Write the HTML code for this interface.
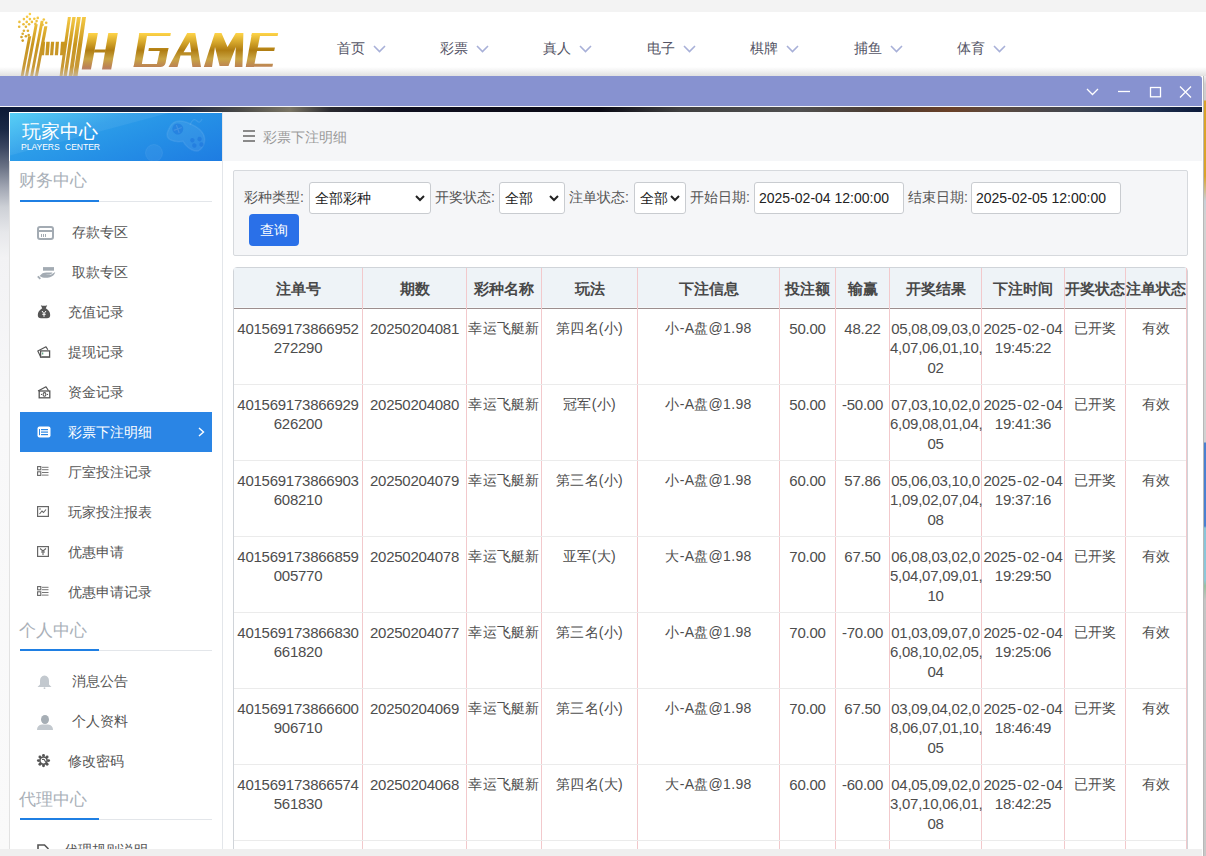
<!DOCTYPE html>
<html><head><meta charset="utf-8">
<style>
*{box-sizing:border-box;margin:0;padding:0}
html,body{width:1206px;height:856px;overflow:hidden;background:#fff;font-family:"Liberation Sans",sans-serif;}
.abs{position:absolute}
#topstrip{left:0;top:0;width:1206px;height:12px;background:#f3f3f3}
#header{left:0;top:12px;width:1206px;height:64px;background:#fff}
#hshadow{left:0;top:67px;width:1206px;height:9px;background:linear-gradient(rgba(255,255,255,0),rgba(200,200,200,0.55))}
.nav{top:39px;font-size:14px;color:#555566;line-height:18px;white-space:nowrap}
.nav svg{position:absolute;left:36px;top:5.5px}
#dialog{left:0;top:76px;width:1202px;height:780px;}
#title{left:0;top:76px;width:1202px;height:30px;background:#8792d0;border-radius:0 3px 0 0}
#tline{left:0;top:106px;width:1202px;height:1px;background:#f4f4f8}
#bgimg{left:0;top:107px;width:1202px;height:749px;background:linear-gradient(90deg,#0c1a3a 0px,#1c2640 180px,#4a4a48 240px,#7a7565 290px,#2a2a30 330px,#101020 400px,#0a0a14 600px,#404040 680px,#505050 800px,#4a3a30 880px,#6a4028 950px,#5a4a40 1000px,#404550 1080px,#203050 1150px,#0c1a3a 1202px)}
#leftfade{left:0;top:107px;width:10px;height:749px;background:linear-gradient(#0c1835 0px,#1a2845 22px,#3a4560 40px,#6a7285 60px,#a0a5b2 80px,#cdd0d6 100px,#e6e7ea 125px,#f2f2f4 150px,#f8f8f9 300px,#fafafa 749px)}
#side{left:9px;top:112px;width:214px;height:744px;background:#fff;border-left:1px solid #e2e2e2;border-right:1px solid #e3e6ea}
#sidehead{left:9px;top:112px;width:213px;height:49px;background:linear-gradient(165deg,rgba(255,255,255,0.10) 0%,rgba(255,255,255,0.06) 40%,rgba(255,255,255,0) 41%),linear-gradient(160deg,#45c9f5 0%,#2c9de9 35%,#2590e6 60%,#1e7ce2 100%);border-top:1px solid #fff;border-left:1px solid #fff}
#main{left:223px;top:112px;width:979px;height:744px;background:#fff}
#crumb{left:223px;top:112px;width:979px;height:49px;background:#f5f6f8}
#filter{left:233px;top:170px;width:955px;height:86px;background:#f5f6f8;border:1px solid #d6d9dd;border-radius:2px}
.lbl{font-size:14px;color:#555;line-height:16px;top:189px;white-space:nowrap}
.sel{top:182px;height:32px;background:#fff;border:1px solid #c9ccd0;border-radius:3px;font-size:14px;color:#222;line-height:30px;padding-left:5px;white-space:nowrap}
.sel svg{position:absolute;right:5px;top:12px}
#btn{left:249px;top:214px;width:50px;height:32px;background:#2a70e8;border-radius:4px;color:#fff;font-size:14px;line-height:32px;text-align:center}
#bottomstrip{left:0;top:849px;width:1202px;height:7px;background:#efefef}
#rightstrip{left:1203px;top:76px;width:3px;height:780px;background:linear-gradient(#f0f0f0 0px,#d0d0d0 8px,#cccccc 24px,#d9a32a 25px,#d9a32a 100px,#c8d0d8 125px,#d2d2d2 140px,#d2d2d2 366px,#4a80d0 367px,#4a80d0 450px,#88c4d8 452px,#8cc8d8 504px,#98c0a0 510px,#c4c4c4 524px,#c8c8c8 780px);border-left:1px solid #b8b8b8}
.sec{left:19px;font-size:17px;color:#a9b0b8;line-height:20px;white-space:nowrap}
.secline{left:20px;width:192px;height:2px;border-bottom:1px solid #e3e6ea}
.secline i{position:absolute;left:0;top:0;width:79px;height:2px;background:#1f7fe3}
.mi{left:20px;width:192px;height:40px;font-size:14px;color:#555;line-height:40px;white-space:nowrap}
.mi .t{position:absolute;left:52px;top:0}
.mi .ic{position:absolute;left:17px;top:14px;line-height:0}
.mi .ic svg{display:block}
.mi.act{background:#2a85e5;color:#fff}
/* table */
#tbl{left:233px;top:267px;width:955px;height:600px;border:1px solid #d0d4d9;border-radius:4px 4px 0 0;overflow:hidden;background:#fff}
table{border-collapse:collapse;table-layout:fixed;font-size:14px;color:#555;}
th{height:41px;background:#eef2f5;font-weight:bold;color:#444;border-right:1px solid #f2c6c9;border-bottom:2px solid #948585;text-align:center;white-space:nowrap;font-size:14px}
td{height:76px;vertical-align:top;text-align:center;border-right:1px solid #f2c6c9;border-bottom:1px solid #e8e8e8;line-height:19px;padding-top:10px;white-space:nowrap}

.th{top:269px;height:39px;line-height:40px;text-align:center;font-weight:bold;font-size:15px;color:#484848;white-space:nowrap;overflow:visible}
.vl{top:268px;width:1px;height:600px;background:#f2c9cc}
.hl{left:234px;width:952px;height:1px;background:#ebebeb}
.td{font-size:14px;line-height:19.25px;color:#4d4d4d;text-align:center;white-space:nowrap;letter-spacing:0.3px}
.td.n{font-size:15px;letter-spacing:-0.25px}
.hy{font-style:normal;padding:0 1.2px}
.mi .chev{position:absolute;left:178px;top:15px}
</style></head><body>
<div id="topstrip" class="abs"></div>
<div id="header" class="abs"></div>

<!-- nav -->
<div class="abs nav" style="left:337px">首页<svg width="13" height="8" viewBox="0 0 13 8"><path d="M1 1L6.5 6.5L12 1" fill="none" stroke="#a8b0d8" stroke-width="1.6"/></svg></div>
<div class="abs nav" style="left:440px">彩票<svg width="13" height="8" viewBox="0 0 13 8"><path d="M1 1L6.5 6.5L12 1" fill="none" stroke="#a8b0d8" stroke-width="1.6"/></svg></div>
<div class="abs nav" style="left:543px">真人<svg width="13" height="8" viewBox="0 0 13 8"><path d="M1 1L6.5 6.5L12 1" fill="none" stroke="#a8b0d8" stroke-width="1.6"/></svg></div>
<div class="abs nav" style="left:647px">电子<svg width="13" height="8" viewBox="0 0 13 8"><path d="M1 1L6.5 6.5L12 1" fill="none" stroke="#a8b0d8" stroke-width="1.6"/></svg></div>
<div class="abs nav" style="left:750px">棋牌<svg width="13" height="8" viewBox="0 0 13 8"><path d="M1 1L6.5 6.5L12 1" fill="none" stroke="#a8b0d8" stroke-width="1.6"/></svg></div>
<div class="abs nav" style="left:854px">捕鱼<svg width="13" height="8" viewBox="0 0 13 8"><path d="M1 1L6.5 6.5L12 1" fill="none" stroke="#a8b0d8" stroke-width="1.6"/></svg></div>
<div class="abs nav" style="left:957px">体育<svg width="13" height="8" viewBox="0 0 13 8"><path d="M1 1L6.5 6.5L12 1" fill="none" stroke="#a8b0d8" stroke-width="1.6"/></svg></div>

<!-- LOGO -->
<svg class="abs" style="left:0;top:0" width="300" height="76" viewBox="0 0 300 76"><defs><linearGradient id="gs" x1="0" y1="13" x2="0" y2="76" gradientUnits="userSpaceOnUse"><stop offset="0" stop-color="#fcd14a"/><stop offset="0.5" stop-color="#c8951e"/><stop offset="1" stop-color="#c89a40"/></linearGradient><linearGradient id="gl" x1="0" y1="33" x2="0" y2="69" gradientUnits="userSpaceOnUse"><stop offset="0" stop-color="#ffd548"/><stop offset="0.48" stop-color="#b07d12"/><stop offset="0.72" stop-color="#c9a543"/><stop offset="1" stop-color="#b8785a"/></linearGradient></defs><g fill="url(#gs)"><polygon points="20.7,76.0 23.6,76.0 31.2,36.2 28.2,36.2"/><polygon points="25.0,76.0 28.0,76.0 37.8,24.3 34.8,24.3"/><polygon points="30.2,76.0 33.1,76.0 43.6,20.7 40.7,20.7"/><polygon points="34.9,76.0 37.9,76.0 47.4,26.3 44.3,26.3"/><polygon points="59.6,76.0 62.6,76.0 70.9,17.0 67.9,17.0"/><polygon points="63.5,76.0 66.9,76.0 75.7,17.0 72.3,17.0"/><polygon points="68.7,76.0 72.5,76.0 80.8,17.0 77.0,17.0"/><polygon points="73.1,76.0 77.6,76.0 86.0,17.0 82.2,17.0"/><polygon points="41.9,41.8 45.1,41.8 44.1,55.3 40.9,55.3"/><polygon points="46.3,41.8 49.8,41.8 48.8,55.3 45.3,55.3"/><polygon points="51.0,41.8 54.2,41.8 53.2,55.3 50.0,55.3"/><polygon points="55.8,41.8 59.0,41.8 58.0,55.3 54.8,55.3"/><polygon points="61.0,41.8 65.3,41.8 64.3,55.3 60.0,55.3"/><circle cx="29.9" cy="14.0" r="1.3"/><circle cx="27.1" cy="16.8" r="1.3"/><circle cx="23.9" cy="19.1" r="1.3"/><circle cx="29.9" cy="19.1" r="1.3"/><circle cx="34.3" cy="18.7" r="1.3"/><circle cx="37.8" cy="17.9" r="1.3"/><circle cx="43.8" cy="19.5" r="1.3"/><circle cx="19.4" cy="21.9" r="1.3"/><circle cx="26.7" cy="21.9" r="1.3"/><circle cx="31.9" cy="21.9" r="1.3"/><circle cx="36.6" cy="21.1" r="1.3"/><circle cx="46.2" cy="22.7" r="1.3"/><circle cx="23.5" cy="24.3" r="1.3"/><circle cx="29.1" cy="24.3" r="1.3"/><circle cx="35.4" cy="23.9" r="1.3"/><circle cx="42.6" cy="24.7" r="1.3"/><circle cx="19.2" cy="26.7" r="1.3"/><circle cx="25.9" cy="26.7" r="1.3"/><circle cx="23.9" cy="30.7" r="1.3"/><circle cx="27.9" cy="30.7" r="1.3"/><circle cx="22.7" cy="33.8" r="1.3"/><circle cx="28.7" cy="35.0" r="1.3"/><circle cx="25.9" cy="36.2" r="1.3"/><circle cx="21.5" cy="37.0" r="1.3"/><circle cx="22.7" cy="40.6" r="1.3"/></g><g fill="url(#gl)"><polygon points="88.4,33.0 97.9,33.0 90.9,69.5 81.7,69.5"/><polygon points="108.3,33.0 117.8,33.0 111.2,69.5 102.0,69.5"/><polygon points="94.5,49.4 106.0,49.4 105.4,52.5 93.9,52.5"/><polygon points="139.4,33.0 170.9,33.0 170.3,36.0 138.8,36.0"/><polygon points="139.4,33.0 147.5,33.0 141.3,67.0 133.6,67.0"/><path d="M134.1 64 L161 64 L160.5 67 L133.6 67 Z"/><polygon points="148.9,48.0 168.4,48.0 167.9,51.0 148.4,51.0"/><path d="M160.4 48 L168.4 48 L165.6 63 Q164.5 67 160 67 L153 67 L156.9 64 Z"/><path fill-rule="evenodd" d="M187.2 33 L195.3 33 L201 67 L192.4 67 L190.8 55.6 L180.5 55.6 L177.5 67 L168.5 67 Z M189.8 42 L191.2 52.3 L183.5 52.3 Z"/><polygon points="203.8,67.0 214.8,33.0 221.5,33.0 227.5,47.0 235.8,33.0 243.4,33.0 242.4,67.0 234.8,67.0 235.8,47.0 228.5,66.0 219.6,66.0 215.0,47.0 212.0,67.0"/><polygon points="252.0,33.0 260.6,33.0 253.9,67.0 245.8,67.0"/><polygon points="252.0,33.0 278.2,33.0 277.6,36.0 251.4,36.0"/><polygon points="256.0,47.5 274.9,47.5 274.2,50.9 255.3,50.9"/><polygon points="246.4,63.7 273.0,63.7 272.4,66.7 245.8,66.7"/></g></svg>

<div id="hshadow" class="abs"></div>
<div id="bgimg" class="abs"></div>
<div id="leftfade" class="abs"></div>
<div id="title" class="abs"></div>
<div id="tline" class="abs"></div>
<svg class="abs" style="left:1080px;top:80px" width="122" height="22" viewBox="0 0 122 22"><g fill="none" stroke="#fff" stroke-width="1.3"><path d="M7 9L12.5 14.5L18 9"/><path d="M38 11.5H50"/><rect x="70.5" y="7.5" width="10" height="9.3"/><path d="M100 6.5L111 17.5M111 6.5L100 17.5"/></g></svg>
<div id="rightstrip" class="abs"></div>

<div id="side" class="abs"></div>
<div id="sidehead" class="abs"></div>
<svg class="abs" style="left:10px;top:113px" width="212" height="48" viewBox="0 0 212 48"><g transform="rotate(25 176 22)"><path d="M158 22 Q158 10 176 10 Q194 10 196 22 Q197 33 188 33 Q182 33 176 29 Q170 33 164 33 Q157 33 158 22 Z" fill="#fff" fill-opacity="0.07" stroke="#fff" stroke-opacity="0.08" stroke-width="1.5"/><circle cx="166" cy="20" r="5.5" fill="#1c74dc" fill-opacity="0.55"/><path d="M163 17L169 23M169 17L163 23" stroke="#fff" stroke-opacity="0.12" stroke-width="1.2"/><circle cx="184" cy="24" r="2.2" fill="#1c74dc" fill-opacity="0.6"/><circle cx="190" cy="20" r="2.2" fill="#1c74dc" fill-opacity="0.6"/><circle cx="188" cy="28" r="2.2" fill="#1c74dc" fill-opacity="0.6"/><circle cx="194" cy="24" r="2.2" fill="#1c74dc" fill-opacity="0.6"/></g><circle cx="144" cy="40" r="8.5" fill="#fff" fill-opacity="0.05" stroke="#fff" stroke-opacity="0.06"/><path d="M180 12 Q183 4 187 8 Q190 11 192 6" fill="none" stroke="#fff" stroke-opacity="0.1" stroke-width="1.2"/></svg>
<div id="main" class="abs"></div>
<div id="crumb" class="abs"></div>
<div id="filter" class="abs"></div>

<div class="abs sec" style="top:171px">财务中心</div>
<div class="abs secline" style="top:200px"><i></i></div>
<div class="abs sec" style="top:621px">个人中心</div>
<div class="abs secline" style="top:649px"><i></i></div>
<div class="abs sec" style="top:790px">代理中心</div>
<div class="abs secline" style="top:818px"><i></i></div>
<div class="abs mi" style="top:212px"><span class="ic"><svg width="17" height="14" viewBox="0 0 17 14"><rect x="1" y="1" width="15" height="12" rx="2" fill="none" stroke="#a3abb3" stroke-width="2"/><rect x="1" y="4" width="15" height="2" fill="#a3abb3"/><rect x="4" y="8" width="1" height="3" fill="#a3abb3"/><rect x="6" y="8" width="1" height="3" fill="#a3abb3"/><rect x="8" y="8" width="1" height="3" fill="#a3abb3"/></svg></span><span class="t" style="left:52px">存款专区</span></div>
<div class="abs mi" style="top:252px"><span class="ic"><svg width="19" height="14" viewBox="0 0 19 14" style="overflow:visible"><rect x="6" y="1.1" width="11" height="3.6" fill="#a3abb3"/><path d="M2.5 10 L5.5 7.3 Q8 6.2 11 6.6 L15.5 6.4 Q14.5 8.6 10.5 8.8 L8.5 8.9 L13.5 8.9 L18.2 6 Q17.5 9.8 13 11.2 Q9 12.2 5.5 11.5 Z" fill="#a3abb3"/><path d="M0.8 10.3 L3.3 12.8" stroke="#a3abb3" stroke-width="1.8"/></svg></span><span class="t" style="left:52px">取款专区</span></div>
<div class="abs mi" style="top:292px"><span class="ic"><svg width="14" height="14" viewBox="0 0 14 14" style="overflow:visible"><path d="M3.8 -0.7 Q7 0.3 10.2 -0.7 L8.8 2.3 Q13.2 5 13.2 9 Q13.2 12.2 10 12.2 L4 12.2 Q0.8 12.2 0.8 9 Q0.8 5 5.2 2.3 Z" fill="#555"/><path d="M5 5 L7 7.6 L9 5 M7 7.6 V10.8 M5.3 8.3 H8.7" stroke="#fff" stroke-width="1" fill="none"/></svg></span><span class="t" style="left:48px">充值记录</span></div>
<div class="abs mi" style="top:332px"><span class="ic"><svg width="14" height="13" viewBox="0 0 14 13"><path d="M3.5 10.5 L0.8 5 L9 0.8 L10.8 3.8" fill="none" stroke="#555" stroke-width="1.2" stroke-linejoin="round"/><rect x="3.6" y="4.9" width="9" height="6.3" fill="#fff" stroke="#555" stroke-width="1.3"/><path d="M4.5 10.5 H12" stroke="#777" stroke-width="1"/><rect x="5" y="6.5" width="1.3" height="2" fill="#6a8"/></svg></span><span class="t" style="left:48px">提现记录</span></div>
<div class="abs mi" style="top:372px"><span class="ic"><svg width="14" height="13" viewBox="0 0 14 13"><path d="M1 5 L9 0.8 L11.5 4.8" fill="none" stroke="#555" stroke-width="1.2" stroke-linejoin="round"/><rect x="2.2" y="5" width="10.6" height="6.8" fill="#fff" stroke="#555" stroke-width="1.3"/><ellipse cx="7.5" cy="8.4" rx="1.4" ry="1.8" fill="none" stroke="#555" stroke-width="1.1"/><circle cx="4.5" cy="8.4" r="0.6" fill="#555"/><circle cx="10.5" cy="8.4" r="0.6" fill="#555"/></svg></span><span class="t" style="left:48px">资金记录</span></div>
<div class="abs mi act" style="top:412px"><span class="ic"><svg width="14" height="12" viewBox="0 0 14 12"><rect x="0.5" y="0.5" width="13" height="11" rx="2" fill="#fff"/><rect x="4" y="3" width="7" height="1.2" fill="#2b86e2"/><rect x="4" y="5.5" width="7" height="1.2" fill="#2b86e2"/><rect x="4" y="8" width="7" height="1.2" fill="#2b86e2"/><rect x="2" y="3" width="1" height="6.2" fill="#2b86e2"/></svg></span><span class="t" style="left:48px">彩票下注明细</span><svg class="chev" width="7" height="10" viewBox="0 0 7 10"><path d="M1 1 L5.5 5 L1 9" fill="none" stroke="#fff" stroke-width="1.4"/></svg></div>
<div class="abs mi" style="top:452px"><span class="ic"><svg width="13" height="11" viewBox="0 0 13 11"><rect x="0.6" y="0.6" width="3.2" height="3.2" fill="none" stroke="#666" stroke-width="1.1"/><rect x="0.6" y="5.8" width="3.2" height="3.6" fill="none" stroke="#666" stroke-width="1.1"/><rect x="5" y="0.8" width="6.5" height="1" fill="#777"/><rect x="5" y="3.2" width="6.5" height="1" fill="#777"/><rect x="5" y="6" width="6.5" height="1" fill="#777"/><rect x="5" y="8.6" width="6.5" height="1" fill="#777"/></svg></span><span class="t" style="left:48px">厅室投注记录</span></div>
<div class="abs mi" style="top:492px"><span class="ic"><svg width="12" height="11" viewBox="0 0 12 11"><rect x="0.6" y="0.6" width="10.8" height="9.8" fill="none" stroke="#666" stroke-width="1.2"/><path d="M2.5 8 L5 5 L6.5 6.5 L9 3.5" fill="none" stroke="#666" stroke-width="1.1"/><circle cx="3" cy="3" r="0.8" fill="#666"/></svg></span><span class="t" style="left:48px">玩家投注报表</span></div>
<div class="abs mi" style="top:532px"><span class="ic"><svg width="12" height="11" viewBox="0 0 12 11"><rect x="0.6" y="0.6" width="10.8" height="9.8" fill="none" stroke="#666" stroke-width="1.2"/><path d="M3 2.5 L6 5 L9 2.5 M6 5 L6 9 M4 6 L8 6" fill="none" stroke="#666" stroke-width="1.1"/></svg></span><span class="t" style="left:48px">优惠申请</span></div>
<div class="abs mi" style="top:572px"><span class="ic"><svg width="13" height="11" viewBox="0 0 13 11"><rect x="0.6" y="0.6" width="3.2" height="3.2" fill="none" stroke="#666" stroke-width="1.1"/><rect x="0.6" y="5.8" width="3.2" height="3.6" fill="none" stroke="#666" stroke-width="1.1"/><rect x="5" y="0.8" width="6.5" height="1" fill="#777"/><rect x="5" y="3.2" width="6.5" height="1" fill="#777"/><rect x="5" y="6" width="6.5" height="1" fill="#777"/><rect x="5" y="8.6" width="6.5" height="1" fill="#777"/></svg></span><span class="t" style="left:48px">优惠申请记录</span></div>
<div class="abs mi" style="top:661px"><span class="ic"><svg width="15" height="14" viewBox="0 0 15 14"><path d="M7.5 0.5 Q12 1 12 6 L12 9.5 L14.5 12 L0.5 12 L3 9.5 L3 6 Q3 1 7.5 0.5 Z" fill="#c3c9cf"/><circle cx="7.5" cy="13.2" r="0.9" fill="#c3c9cf"/></svg></span><span class="t" style="left:52px">消息公告</span></div>
<div class="abs mi" style="top:701px"><span class="ic"><svg width="16" height="15" viewBox="0 0 16 15"><ellipse cx="8" cy="4.5" rx="4" ry="4.5" fill="#a6aeb5"/><path d="M0 15 Q0 10 5 9.5 L11 9.5 Q16 10 16 15 Z" fill="#c3c9cf"/></svg></span><span class="t" style="left:52px">个人资料</span></div>
<div class="abs mi" style="top:741px"><span class="ic"><svg width="14" height="13" viewBox="0 0 14 13" style="overflow:visible"><g fill="#555"><circle cx="11.60" cy="5.60" r="1.45"/><circle cx="10.11" cy="9.21" r="1.45"/><circle cx="6.50" cy="10.70" r="1.45"/><circle cx="2.89" cy="9.21" r="1.45"/><circle cx="1.40" cy="5.60" r="1.45"/><circle cx="2.89" cy="1.99" r="1.45"/><circle cx="6.50" cy="0.50" r="1.45"/><circle cx="10.11" cy="1.99" r="1.45"/></g><circle cx="6.5" cy="5.6" r="3.6" fill="none" stroke="#555" stroke-width="1.6"/><path d="M5 4.5 Q7.5 3.8 8 6 L9.5 8" fill="none" stroke="#555" stroke-width="1.1"/></svg></span><span class="t" style="left:48px">修改密码</span></div>
<div class="abs mi" style="top:830px"><span class="ic"><svg width="12" height="14" viewBox="0 0 12 14"><path d="M1 1 L7.5 1 L11 4.5 L11 13 L1 13 Z" fill="none" stroke="#555" stroke-width="1.6"/></svg></span><span class="t" style="left:44px">代理规则说明</span></div>
<div class="abs" style="left:22px;top:122px;font-size:19px;line-height:20px;color:#fff;white-space:nowrap">玩家中心</div>
<div class="abs" id="pc" style="left:21px;top:142px;font-size:8.6px;line-height:10px;color:#fff;white-space:nowrap;word-spacing:3px;font-weight:normal;letter-spacing:-0.05px">PLAYERS CENTER</div>
<div class="abs" style="left:243px;top:130px;width:12px;height:2px;background:#8a8a8a;box-shadow:0 5px 0 #8a8a8a,0 10px 0 #8a8a8a"></div>
<div class="abs" style="left:263px;top:127px;font-size:14px;line-height:20px;color:#9a9a9a;white-space:nowrap">彩票下注明细</div>
<div class="abs lbl" style="left:244px">彩种类型:</div>
<div class="abs sel" style="left:309px;width:122px">全部彩种<svg width="10" height="7" viewBox="0 0 10 7"><path d="M1 1L5 5L9 1" fill="none" stroke="#222" stroke-width="2"/></svg></div>
<div class="abs lbl" style="left:435px">开奖状态:</div>
<div class="abs sel" style="left:499px;width:66px">全部<svg width="10" height="7" viewBox="0 0 10 7"><path d="M1 1L5 5L9 1" fill="none" stroke="#222" stroke-width="2"/></svg></div>
<div class="abs lbl" style="left:569px">注单状态:</div>
<div class="abs sel" style="left:634px;width:52px">全部<svg width="10" height="7" viewBox="0 0 10 7"><path d="M1 1L5 5L9 1" fill="none" stroke="#222" stroke-width="2"/></svg></div>
<div class="abs lbl" style="left:690px">开始日期:</div>
<div class="abs sel" style="left:754px;width:150px;padding-left:4px">2025-02-04 12:00:00</div>
<div class="abs lbl" style="left:908px">结束日期:</div>
<div class="abs sel" style="left:971px;width:150px;padding-left:4px">2025-02-05 12:00:00</div>

<div id="btn" class="abs">查询</div>
<div id="tbl" class="abs"></div>
<div class="abs" style="left:234px;top:268px;width:952px;height:39px;background:#eef3f7"></div>
<div class="abs" style="left:234px;top:307px;width:952px;height:1px;background:#f5f8fa"></div><div class="abs" style="left:234px;top:308px;width:952px;height:1px;background:#9c8e8e"></div>
<div class="abs th" style="left:234px;width:128px">注单号</div>
<div class="abs th" style="left:363px;width:103px">期数</div>
<div class="abs th" style="left:467px;width:74px">彩种名称</div>
<div class="abs th" style="left:542px;width:95px">玩法</div>
<div class="abs th" style="left:638px;width:141px">下注信息</div>
<div class="abs th" style="left:780px;width:55px">投注额</div>
<div class="abs th" style="left:836px;width:53px">输赢</div>
<div class="abs th" style="left:890px;width:91px">开奖结果</div>
<div class="abs th" style="left:982px;width:82px">下注时间</div>
<div class="abs th" style="left:1065px;width:60px">开奖状态</div>
<div class="abs th" style="left:1126px;width:60px">注单状态</div>
<div class="abs vl" style="left:362px"></div>
<div class="abs vl" style="left:466px"></div>
<div class="abs vl" style="left:541px"></div>
<div class="abs vl" style="left:637px"></div>
<div class="abs vl" style="left:779px"></div>
<div class="abs vl" style="left:835px"></div>
<div class="abs vl" style="left:889px"></div>
<div class="abs vl" style="left:981px"></div>
<div class="abs vl" style="left:1064px"></div>
<div class="abs vl" style="left:1125px"></div>
<div class="abs vl" style="left:1186px"></div>
<div class="abs hl" style="top:384px"></div>
<div class="abs hl" style="top:460px"></div>
<div class="abs hl" style="top:536px"></div>
<div class="abs hl" style="top:612px"></div>
<div class="abs hl" style="top:688px"></div>
<div class="abs hl" style="top:764px"></div>
<div class="abs hl" style="top:840px"></div>
<div class="abs hl" style="top:916px"></div>
<div class="abs td n" style="left:234px;top:319px;width:128px">401569173866952<br>272290</div>
<div class="abs td n" style="left:363px;top:319px;width:103px">20250204081</div>
<div class="abs td" style="left:467px;top:319px;width:74px">幸运飞艇新</div>
<div class="abs td" style="left:542px;top:319px;width:95px">第四名(小)</div>
<div class="abs td" style="left:638px;top:319px;width:141px">小-A盘@1.98</div>
<div class="abs td n" style="left:780px;top:319px;width:55px">50.00</div>
<div class="abs td n" style="left:836px;top:319px;width:53px">48.22</div>
<div class="abs td n" style="left:890px;top:319px;width:91px">05,08,09,03,0<br>4,07,06,01,10,<br>02</div>
<div class="abs td n" style="left:982px;top:319px;width:82px">2025<i class="hy">-</i>02<i class="hy">-</i>04<br>19:45:22</div>
<div class="abs td" style="left:1065px;top:319px;width:60px">已开奖</div>
<div class="abs td" style="left:1126px;top:319px;width:60px">有效</div>
<div class="abs td n" style="left:234px;top:395px;width:128px">401569173866929<br>626200</div>
<div class="abs td n" style="left:363px;top:395px;width:103px">20250204080</div>
<div class="abs td" style="left:467px;top:395px;width:74px">幸运飞艇新</div>
<div class="abs td" style="left:542px;top:395px;width:95px">冠军(小)</div>
<div class="abs td" style="left:638px;top:395px;width:141px">小-A盘@1.98</div>
<div class="abs td n" style="left:780px;top:395px;width:55px">50.00</div>
<div class="abs td n" style="left:836px;top:395px;width:53px">-50.00</div>
<div class="abs td n" style="left:890px;top:395px;width:91px">07,03,10,02,0<br>6,09,08,01,04,<br>05</div>
<div class="abs td n" style="left:982px;top:395px;width:82px">2025<i class="hy">-</i>02<i class="hy">-</i>04<br>19:41:36</div>
<div class="abs td" style="left:1065px;top:395px;width:60px">已开奖</div>
<div class="abs td" style="left:1126px;top:395px;width:60px">有效</div>
<div class="abs td n" style="left:234px;top:471px;width:128px">401569173866903<br>608210</div>
<div class="abs td n" style="left:363px;top:471px;width:103px">20250204079</div>
<div class="abs td" style="left:467px;top:471px;width:74px">幸运飞艇新</div>
<div class="abs td" style="left:542px;top:471px;width:95px">第三名(小)</div>
<div class="abs td" style="left:638px;top:471px;width:141px">小-A盘@1.98</div>
<div class="abs td n" style="left:780px;top:471px;width:55px">60.00</div>
<div class="abs td n" style="left:836px;top:471px;width:53px">57.86</div>
<div class="abs td n" style="left:890px;top:471px;width:91px">05,06,03,10,0<br>1,09,02,07,04,<br>08</div>
<div class="abs td n" style="left:982px;top:471px;width:82px">2025<i class="hy">-</i>02<i class="hy">-</i>04<br>19:37:16</div>
<div class="abs td" style="left:1065px;top:471px;width:60px">已开奖</div>
<div class="abs td" style="left:1126px;top:471px;width:60px">有效</div>
<div class="abs td n" style="left:234px;top:547px;width:128px">401569173866859<br>005770</div>
<div class="abs td n" style="left:363px;top:547px;width:103px">20250204078</div>
<div class="abs td" style="left:467px;top:547px;width:74px">幸运飞艇新</div>
<div class="abs td" style="left:542px;top:547px;width:95px">亚军(大)</div>
<div class="abs td" style="left:638px;top:547px;width:141px">大-A盘@1.98</div>
<div class="abs td n" style="left:780px;top:547px;width:55px">70.00</div>
<div class="abs td n" style="left:836px;top:547px;width:53px">67.50</div>
<div class="abs td n" style="left:890px;top:547px;width:91px">06,08,03,02,0<br>5,04,07,09,01,<br>10</div>
<div class="abs td n" style="left:982px;top:547px;width:82px">2025<i class="hy">-</i>02<i class="hy">-</i>04<br>19:29:50</div>
<div class="abs td" style="left:1065px;top:547px;width:60px">已开奖</div>
<div class="abs td" style="left:1126px;top:547px;width:60px">有效</div>
<div class="abs td n" style="left:234px;top:623px;width:128px">401569173866830<br>661820</div>
<div class="abs td n" style="left:363px;top:623px;width:103px">20250204077</div>
<div class="abs td" style="left:467px;top:623px;width:74px">幸运飞艇新</div>
<div class="abs td" style="left:542px;top:623px;width:95px">第三名(小)</div>
<div class="abs td" style="left:638px;top:623px;width:141px">小-A盘@1.98</div>
<div class="abs td n" style="left:780px;top:623px;width:55px">70.00</div>
<div class="abs td n" style="left:836px;top:623px;width:53px">-70.00</div>
<div class="abs td n" style="left:890px;top:623px;width:91px">01,03,09,07,0<br>6,08,10,02,05,<br>04</div>
<div class="abs td n" style="left:982px;top:623px;width:82px">2025<i class="hy">-</i>02<i class="hy">-</i>04<br>19:25:06</div>
<div class="abs td" style="left:1065px;top:623px;width:60px">已开奖</div>
<div class="abs td" style="left:1126px;top:623px;width:60px">有效</div>
<div class="abs td n" style="left:234px;top:699px;width:128px">401569173866600<br>906710</div>
<div class="abs td n" style="left:363px;top:699px;width:103px">20250204069</div>
<div class="abs td" style="left:467px;top:699px;width:74px">幸运飞艇新</div>
<div class="abs td" style="left:542px;top:699px;width:95px">第三名(小)</div>
<div class="abs td" style="left:638px;top:699px;width:141px">小-A盘@1.98</div>
<div class="abs td n" style="left:780px;top:699px;width:55px">70.00</div>
<div class="abs td n" style="left:836px;top:699px;width:53px">67.50</div>
<div class="abs td n" style="left:890px;top:699px;width:91px">03,09,04,02,0<br>8,06,07,01,10,<br>05</div>
<div class="abs td n" style="left:982px;top:699px;width:82px">2025<i class="hy">-</i>02<i class="hy">-</i>04<br>18:46:49</div>
<div class="abs td" style="left:1065px;top:699px;width:60px">已开奖</div>
<div class="abs td" style="left:1126px;top:699px;width:60px">有效</div>
<div class="abs td n" style="left:234px;top:775px;width:128px">401569173866574<br>561830</div>
<div class="abs td n" style="left:363px;top:775px;width:103px">20250204068</div>
<div class="abs td" style="left:467px;top:775px;width:74px">幸运飞艇新</div>
<div class="abs td" style="left:542px;top:775px;width:95px">第四名(大)</div>
<div class="abs td" style="left:638px;top:775px;width:141px">大-A盘@1.98</div>
<div class="abs td n" style="left:780px;top:775px;width:55px">60.00</div>
<div class="abs td n" style="left:836px;top:775px;width:53px">-60.00</div>
<div class="abs td n" style="left:890px;top:775px;width:91px">04,05,09,02,0<br>3,07,10,06,01,<br>08</div>
<div class="abs td n" style="left:982px;top:775px;width:82px">2025<i class="hy">-</i>02<i class="hy">-</i>04<br>18:42:25</div>
<div class="abs td" style="left:1065px;top:775px;width:60px">已开奖</div>
<div class="abs td" style="left:1126px;top:775px;width:60px">有效</div>
<div id="bottomstrip" class="abs"></div>
</body></html>
